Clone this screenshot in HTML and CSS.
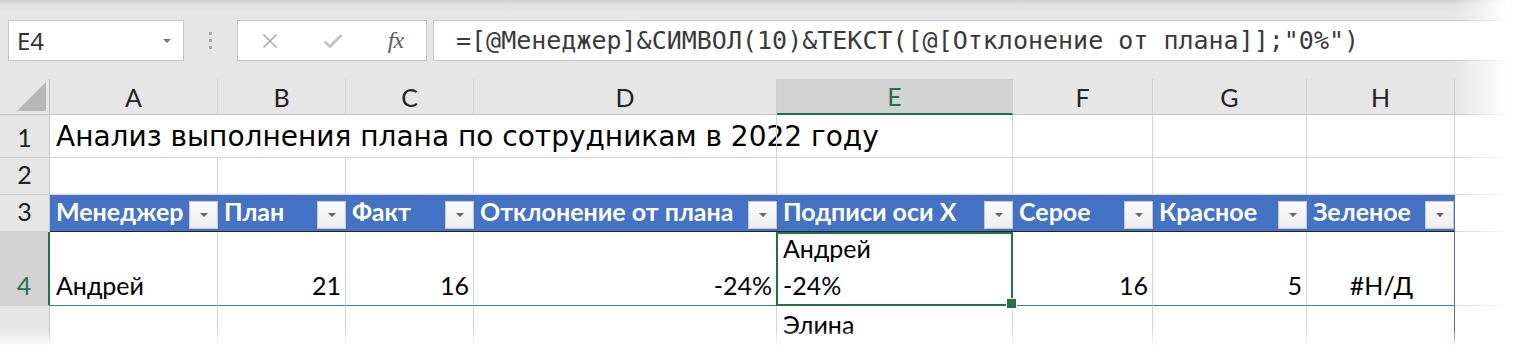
FILE: index.html
```html
<!DOCTYPE html>
<html lang="ru">
<head>
    <meta charset="UTF-8">
    <meta name="viewport" content="width=device-width, initial-scale=1.0">
    <title>Анализ выполнения плана</title>
    <link rel="stylesheet" href="styles.css">
</head>
<body>
    <div class="formula-bar">
        <div class="name-box">E4<span class="arrow"></span></div>
        <div class="grip"><i></i><i></i><i></i></div>
        <div class="fx-buttons">
            <svg width="16" height="16" viewBox="0 0 16 16"><path d="M1.5 1.5L14.5 14.5M14.5 1.5L1.5 14.5" stroke="#a9a9a9" stroke-width="1.6" fill="none"/></svg>
            <svg width="20" height="16" viewBox="0 0 20 16"><path d="M1.5 8.5L7 13.5L18.5 2" stroke="#c4c4c4" stroke-width="3" fill="none"/></svg>
            <span class="fx">fx</span>
        </div>
        <div class="formula">=[@Менеджер]&amp;СИМВОЛ(10)&amp;ТЕКСТ([@[Отклонение от плана]];"0%")</div>
    </div>

    <div class="sheet">
        <div class="corner"><span></span></div>
        <div class="col-head">A</div>
        <div class="col-head">B</div>
        <div class="col-head">C</div>
        <div class="col-head">D</div>
        <div class="col-head active">E</div>
        <div class="col-head">F</div>
        <div class="col-head">G</div>
        <div class="col-head">H</div>
        <div class="col-head"></div>

        <div class="row-head">1</div>
        <div class="cell title no-line">Анализ выполнения плана по сотрудникам в 2022 году</div>
        <div class="cell no-line"></div>
        <div class="cell no-line"></div>
        <div class="cell"></div>
        <div class="cell"></div>
        <div class="cell"></div>
        <div class="cell"></div>
        <div class="cell"></div>
        <div class="cell"></div>

        <div class="row-head">2</div>
        <div class="cell"></div>
        <div class="cell"></div>
        <div class="cell"></div>
        <div class="cell"></div>
        <div class="cell"></div>
        <div class="cell"></div>
        <div class="cell"></div>
        <div class="cell"></div>
        <div class="cell"></div>

        <div class="row-head">3</div>
        <div class="th"><span>Менеджер</span><b class="filter"></b></div>
        <div class="th"><span>План</span><b class="filter"></b></div>
        <div class="th"><span>Факт</span><b class="filter"></b></div>
        <div class="th"><span>Отклонение от плана</span><b class="filter"></b></div>
        <div class="th"><span>Подписи оси X</span><b class="filter"></b></div>
        <div class="th"><span>Серое</span><b class="filter"></b></div>
        <div class="th"><span>Красное</span><b class="filter"></b></div>
        <div class="th last"><span>Зеленое</span><b class="filter"></b></div>
        <div class="cell"></div>

        <div class="row-head active">4</div>
        <div class="cell td">Андрей</div>
        <div class="cell td num">21</div>
        <div class="cell td num">16</div>
        <div class="cell td num">-24%</div>
        <div class="cell td selected">Андрей<br>-24%</div>
        <div class="cell td num">16</div>
        <div class="cell td num">5</div>
        <div class="cell td center last">#Н/Д</div>
        <div class="cell"></div>

        <div class="row-head"></div>
        <div class="cell td"></div>
        <div class="cell td"></div>
        <div class="cell td"></div>
        <div class="cell td"></div>
        <div class="cell td top">Элина</div>
        <div class="cell td"></div>
        <div class="cell td"></div>
        <div class="cell td last"></div>
        <div class="cell"></div>
    </div>

    <div class="fade-right"></div>
    <div class="fade-bottom"></div>
</body>
</html>
```

FILE: styles.css
```css
* {
    box-sizing: border-box;
}
body {
    margin: 0;
    height: 345px;
    overflow: hidden;
    position: relative;
    background: #fff;
    font-family: Lato, "Liberation Sans", sans-serif;
    color: #000;
}

/* formula bar */
.formula-bar {
    height: 79px;
    display: flex;
    align-items: flex-start;
    padding: 20px 0 0 8px;
    background: linear-gradient(#cfcfcf, #e2e2e2 5px, #e6e6e6 12px);
}
.name-box {
    width: 176px;
    height: 41px;
    display: flex;
    align-items: center;
    justify-content: space-between;
    padding: 0 12px 0 8px;
    background: #fff;
    border: 1px solid #c6c6c6;
    font-family: "Noto Sans", sans-serif;
    font-size: 24px;
    color: #333;
}
.name-box .arrow {
    border-left: 4px solid transparent;
    border-right: 4px solid transparent;
    border-top: 4px solid #777;
}
.grip {
    width: 53px;
    height: 41px;
    display: flex;
    flex-direction: column;
    align-items: center;
    justify-content: center;
    gap: 4px;
}
.grip i {
    width: 3px;
    height: 3px;
    background: #a6a6a6;
}
.fx-buttons {
    width: 190px;
    height: 41px;
    display: grid;
    grid-template-columns: repeat(3, 63px);
    justify-items: center;
    align-items: center;
    background: #fff;
    border: 1px solid #c6c6c6;
}
.fx {
    font-family: "Liberation Serif", serif;
    font-style: italic;
    font-size: 24px;
    color: #5e5e5e;
    letter-spacing: -1px;
}
.formula {
    flex: 1;
    height: 41px;
    margin-left: 6px;
    padding-left: 22px;
    background: #fff;
    border: 1px solid #c6c6c6;
    border-right: none;
    font-family: "DejaVu Sans Mono", monospace;
    font-size: 25px;
    line-height: 39px;
    color: #3a3a3a;
    white-space: nowrap;
    overflow: hidden;
}

/* grid */
.sheet {
    display: grid;
    grid-template-columns: 50px 168px 128px 128px 303px 236px 140px 154px 148px 1fr;
    grid-template-rows: 36px 43px 37px 37px 74px 74px;
}
.corner {
    background: #e6e6e6;
    border-right: 1px solid #c4c4c4;
    border-bottom: 1px solid #c4c4c4;
    display: flex;
    justify-content: flex-end;
    align-items: flex-end;
    padding: 0 3px 3px 0;
}
.corner span {
    border-left: 29px solid transparent;
    border-bottom: 29px solid #b7b7b7;
}
.col-head {
    background: #e6e6e6;
    border-right: 1px solid #d0d0d0;
    border-bottom: 1px solid #c4c4c4;
    display: flex;
    justify-content: center;
    align-items: center;
    font-size: 25px;
    color: #222;
}
.col-head.active {
    background: #d2d2d2;
    color: #217346;
    border-bottom: 2px solid #217346;
}
.row-head {
    background: #e6e6e6;
    border-right: 1px solid #c4c4c4;
    border-bottom: 1px solid #d0d0d0;
    display: flex;
    justify-content: center;
    align-items: flex-end;
    padding-bottom: 1px;
    font-size: 25px;
    line-height: 37px;
    color: #222;
}
.row-head.active {
    background: #d2d2d2;
    color: #217346;
    border-right: 2px solid #217346;
}
.cell {
    border-right: 1px solid #d4d4d4;
    border-bottom: 1px solid #d4d4d4;
    display: flex;
    flex-direction: column;
    justify-content: flex-end;
    padding: 0 4px 1px 6px;
    font-size: 25px;
    line-height: 37px;
    white-space: nowrap;
}
.cell.no-line {
    border-right: none;
}
.cell.title {
    font-family: "DejaVu Sans", sans-serif;
    font-size: 28px;
    padding-bottom: 2px;
}
.cell.num {
    align-items: flex-end;
}
.cell.center {
    align-items: center;
}
.cell.top {
    justify-content: flex-start;
    padding-top: 0;
}
.cell.td {
    border-bottom-color: #4472c4;
}
.cell.last,
.th.last {
    border-right: 1px solid #4472c4;
}

/* table header */
.th {
    background: #4472c4;
    border-bottom: 1px solid #1f2433;
    display: flex;
    align-items: flex-end;
    padding: 0 0 1px 6px;
    font-size: 25px;
    font-weight: bold;
    line-height: 37px;
    color: #fff;
}
.th span {
    flex: 1;
    min-width: 0;
    overflow: hidden;
    white-space: nowrap;
}
.filter {
    flex: none;
    width: 29px;
    height: 28px;
    margin-bottom: 1px;
    display: flex;
    justify-content: center;
    align-items: center;
    background: linear-gradient(#fbfbfb, #eeeef0);
    border: 1px solid #c8c8c8;
}
.filter::after {
    content: "";
    border-left: 4px solid transparent;
    border-right: 4px solid transparent;
    border-top: 4px solid #666;
}

/* selection */
.selected {
    position: relative;
}
.selected::after {
    content: "";
    position: absolute;
    left: -1px;
    top: 0;
    right: -1px;
    bottom: -1px;
    border: 2px solid #217346;
}
.selected::before {
    content: "";
    position: absolute;
    right: -5px;
    bottom: -4px;
    width: 9px;
    height: 9px;
    background: #217346;
    border: 1px solid #fff;
    z-index: 1;
}

/* screenshot edges */
.fade-right {
    position: absolute;
    top: 0;
    right: 0;
    width: 60px;
    height: 100%;
    background: linear-gradient(to right, rgba(255, 255, 255, 0), #fff 90%);
}
.fade-bottom {
    position: absolute;
    left: 0;
    bottom: 0;
    width: 100%;
    height: 16px;
    background: linear-gradient(rgba(255, 255, 255, 0), rgba(255, 255, 255, 0.9));
}
```
